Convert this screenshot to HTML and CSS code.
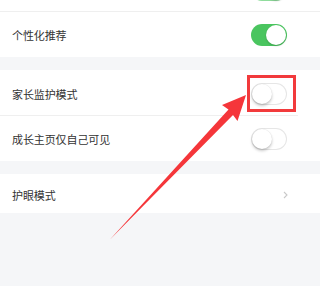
FILE: index.html
```html
<!DOCTYPE html>
<html>
<head>
<meta charset="utf-8">
<link rel="stylesheet" href="styles.css">
</head>
<body>
<div class="page">
  <div class="top-stub">
    <div class="stub-inner">
      <span class="toggle on stub-toggle"><span class="knob"></span></span>
    </div>
  </div>
  <div class="group">
    <div class="row"><span class="label">个性化推荐</span><span class="toggle on"><span class="knob"></span></span></div>
  </div>
  <div class="group">
    <div class="row sep"><span class="label">家长监护模式</span><span class="toggle"><span class="knob"></span></span></div>
    <div class="row"><span class="label">成长主页仅自己可见</span><span class="toggle"><span class="knob"></span></span></div>
  </div>
  <div class="group">
    <div class="row short"><span class="label">护眼模式</span>
      <svg class="chev" width="5" height="8" viewBox="0 0 5 8"><path d="M1 1 L4 4 L1 7" fill="none" stroke="#c9c9c9" stroke-width="1.1"/></svg>
    </div>
  </div>
  <div class="highlight"></div>
  <svg class="arrow" width="298" height="286" viewBox="0 0 298 286">
    <polygon points="246,95 222,105 228.5,109.5 109.5,240 233,115 237.5,121" fill="#f5363a"/>
  </svg>
</div>
</body>
</html>
```
FILE: styles.css
```css
html, body {
  margin: 0;
  padding: 0;
}
body {
  background: #f5f6f8;
  font-family: "Noto Sans CJK SC", "Noto Sans", sans-serif;
}
.page {
  position: relative;
  width: 100%;
  min-width: 298px;
  height: 286px;
  overflow: hidden;
}
.top-stub {
  height: 11px;
  background: #fff;
  border-bottom: 1px solid #efefef;
  overflow: hidden;
}
.stub-inner {
  width: 298px;
  display: flex;
  justify-content: flex-end;
  padding-right: 11px;
  box-sizing: border-box;
}
.stub-toggle {
  margin-top: -21px;
}
.group {
  background: #fff;
  margin-bottom: 13px;
}
.row {
  width: 298px;
  height: 45px;
  display: flex;
  align-items: center;
  justify-content: space-between;
  padding: 1px 11px 0 12px;
  box-sizing: border-box;
}
.row.sep {
  border-bottom: 1px solid #efefef;
  height: 46px;
  padding-top: 2px;
}
.row.short {
  height: 39px;
  padding-top: 3px;
  padding-right: 10px;
}
.label {
  font-size: 11px;
  color: #333;
  letter-spacing: -0.1px;
}
.toggle {
  position: relative;
  width: 36px;
  height: 22px;
  border-radius: 11px;
  background: #fff;
  box-shadow: inset 0 0 0 1px #e6e6e6;
  flex: none;
}
.toggle .knob {
  position: absolute;
  top: 1px;
  left: 1px;
  width: 20px;
  height: 20px;
  border-radius: 50%;
  background: #fff;
  box-shadow: 0 2px 3px rgba(0,0,0,0.22), 0 0 1px rgba(0,0,0,0.15);
}
.toggle.on {
  background: #4ac55f;
  box-shadow: none;
}
.toggle.on .knob {
  left: 15px;
  box-shadow: 0 1px 2px rgba(0,0,0,0.2);
}
.stub-toggle.toggle.on {
  background: #8fdc9c;
}
.chev {
  display: block;
}
.highlight {
  position: absolute;
  left: 247px;
  top: 75px;
  width: 43px;
  height: 31px;
  border: 3px solid #f23a3c;
}
.arrow {
  position: absolute;
  left: 0;
  top: 0;
}
```
